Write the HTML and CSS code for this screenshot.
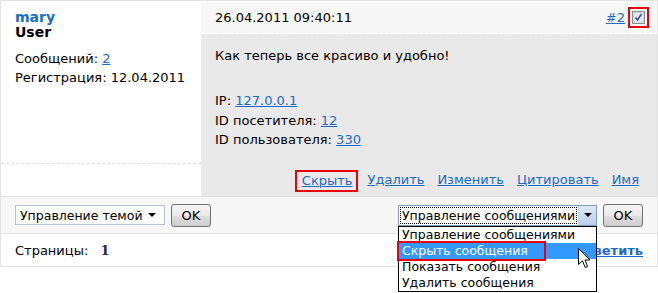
FILE: index.html
```html
<!DOCTYPE html>
<html lang="ru">
<head>
    <meta charset="UTF-8">
    <title>Форум</title>
    <link rel="stylesheet" href="styles.css">
</head>
<body>
    <div class="board">
        <div class="post">
            <div class="author">
                <div class="author-main">
                    <a class="author-name" href="#">mary</a>
                    <div class="author-role">User</div>
                    <div class="author-stat">Сообщений: <a href="#">2</a></div>
                    <div class="author-stat">Регистрация: 12.04.2011</div>
                </div>
            </div>
            <div class="message">
                <div class="message-head">
                    <span>26.04.2011 09:40:11</span>
                    <span class="head-right">
                        <a href="#">#2</a>
                        <span class="marked box-check">
                            <svg width="13" height="13" viewBox="0 0 13 13">
                                <rect x="0.5" y="0.5" width="12" height="12" fill="#f0f0f4" stroke="#8e8f8f"/>
                                <rect x="1.5" y="1.5" width="10" height="10" fill="#e4e6ee" stroke="#d3d6de"/>
                                <path d="M3.5 6.5 L5.5 9 L9.5 3" fill="none" stroke="#3d4f98" stroke-width="1.6"/>
                            </svg>
                        </span>
                    </span>
                </div>
                <div class="message-body">
                    <p class="message-text">Как теперь все красиво и удобно!</p>
                    <div class="message-info">
                        <div>IP: <a href="#">127.0.0.1</a></div>
                        <div>ID посетителя: <a href="#">12</a></div>
                        <div>ID пользователя: <a href="#">330</a></div>
                    </div>
                    <div class="message-actions">
                        <span class="marked"><a href="#">Скрыть</a></span>
                        <a href="#">Удалить</a>
                        <a href="#">Изменить</a>
                        <a href="#">Цитировать</a>
                        <a href="#">Имя</a>
                    </div>
                </div>
            </div>
        </div>
        <div class="controls">
            <div class="control-group">
                <span class="select select-theme">Управление темой<span class="arrow"></span></span>
                <button class="ok-button">OK</button>
            </div>
            <div class="control-group">
                <span class="select select-posts">
                    <span class="select-value">Управление сообщениями</span>
                    <span class="select-button"><span class="arrow"></span></span>
                    <ul class="dropdown">
                        <li>Управление сообщениями</li>
                        <li class="active">Скрыть сообщения</li>
                        <li>Показать сообщения</li>
                        <li>Удалить сообщения</li>
                    </ul>
                </span>
                <button class="ok-button">OK</button>
            </div>
        </div>
        <div class="pages">
            <span>Страницы: <b class="page-num">1</b></span>
            <a class="reply" href="#">Ответить</a>
        </div>
    </div>
    <svg class="cursor" width="13" height="21" viewBox="0 0 13 21">
        <path d="M0.5 0.5 L0.5 16.5 L4.5 12.8 L7.2 19.5 L9.6 18.5 L7 12 L12 12 Z" fill="#fff" stroke="#000" stroke-width="1"/>
    </svg>
</body>
</html>
```

FILE: styles.css
```css
html, body {
    height: 100%;
}

body {
    margin: 0;
    font-family: 'DejaVu Sans', Verdana, sans-serif;
    font-size: 13px;
    color: #000;
    background: #fff;
    position: relative;
}

a {
    color: #1a6bc6;
}

.board {
    width: 656px;
    border: 1px solid #e3e3e3;
    border-bottom: none;
}

.post {
    display: flex;
    height: 195px;
}

.author {
    width: 200px;
    background: #fff;
}

.author-main {
    height: 154px;
    padding: 8px 14px 0;
    border-bottom: 1px dashed #dedede;
}

.author-name {
    display: block;
    color: #1b6fc3;
    font-weight: bold;
    font-size: 14px;
    line-height: 16px;
    text-decoration: none;
}

.author-role {
    font-weight: bold;
    font-size: 14px;
    line-height: 15px;
    margin-bottom: 9px;
}

.author-stat {
    line-height: 19px;
}

.message {
    flex: 1;
    display: flex;
    flex-direction: column;
}

.message-head {
    height: 31px;
    border-top: 1px solid #fff;
    border-bottom: 1px dashed #fff;
    background: #f7f7f7;
    padding: 0 10px 0 14px;
    display: flex;
    justify-content: space-between;
    align-items: center;
}

.head-right {
    display: flex;
    align-items: center;
    gap: 5px;
}

.marked {
    outline: 2px solid #e8000b;
}

.box-check {
    display: flex;
    padding: 2px;
}

.message-body {
    flex: 1;
    background: #e9e9e9;
    padding: 0 18px 0 14px;
    display: flex;
    flex-direction: column;
}

.message-text {
    margin: 14px 0 0;
    line-height: 16px;
}

.message-info {
    margin-top: 27px;
    line-height: 19.5px;
}

.message-actions {
    margin-top: auto;
    margin-bottom: 6px;
    display: flex;
    justify-content: flex-end;
    gap: 13px;
    line-height: 16px;
}

.message-actions .marked {
    padding: 1px 3px 1px 5px;
    margin-right: -1px;
}

.controls {
    height: 36px;
    border-top: 1px solid #e3e3e3;
    background: #f7f7f7;
    padding: 0 14px;
    display: flex;
    justify-content: space-between;
    align-items: center;
}

.control-group {
    display: flex;
    align-items: center;
    gap: 6px;
}

.select {
    position: relative;
    display: flex;
    align-items: center;
    height: 18px;
    border: 1px solid #b8c2cc;
    background: #fff;
    font-size: 12.5px;
    white-space: nowrap;
}

.select-theme {
    width: 142px;
    padding-left: 4px;
    padding-right: 2px;
    justify-content: space-between;
}

.select-theme .arrow {
    margin-right: 6px;
}

.arrow {
    width: 0;
    height: 0;
    border-left: 4px solid transparent;
    border-right: 4px solid transparent;
    border-top: 4px solid #000;
}

.select-posts {
    width: 197px;
    height: 19px;
    border-color: #7f9db9;
}

.select-value {
    flex: 1;
    margin: 1px;
    padding: 0 2px;
    outline: 1px dotted #000;
    outline-offset: -1px;
    line-height: 17px;
}

.select-button {
    width: 18px;
    height: 19px;
    display: flex;
    align-items: center;
    justify-content: center;
    background: linear-gradient(#dce8f6, #b9cfea);
    border-left: 1px solid #c3d3e8;
}

.dropdown {
    position: absolute;
    top: 20px;
    left: -1px;
    width: 197px;
    margin: 0;
    padding: 0;
    list-style: none;
    border: 1px solid #000;
    background: #fff;
}

.dropdown li {
    height: 16px;
    line-height: 16px;
    padding-left: 3px;
}

.dropdown .active {
    background: #3399ff;
    color: #fff;
    outline: 2px solid #e8000b;
    margin-right: 52px;
    box-shadow: 52px 0 0 #3399ff;
}

.ok-button {
    width: 40px;
    height: 23px;
    padding: 0;
    font-family: inherit;
    font-size: 13px;
    color: #000;
    border: 1px solid #707070;
    border-radius: 3px;
    background: linear-gradient(#f3f3f3 0%, #ebebeb 50%, #dddddd 51%, #cfcfcf 100%);
}

.pages {
    height: 32px;
    border-top: 1px solid #e3e3e3;
    border-bottom: 1px solid #e3e3e3;
    padding: 0 14px;
    display: flex;
    justify-content: space-between;
    align-items: center;
}

.page-num {
    margin-left: 8px;
    color: #1a2250;
    font-family: 'DejaVu Serif', Georgia, serif;
}

.reply {
    font-weight: bold;
}

.cursor {
    position: absolute;
    left: 578px;
    top: 248px;
}
```
